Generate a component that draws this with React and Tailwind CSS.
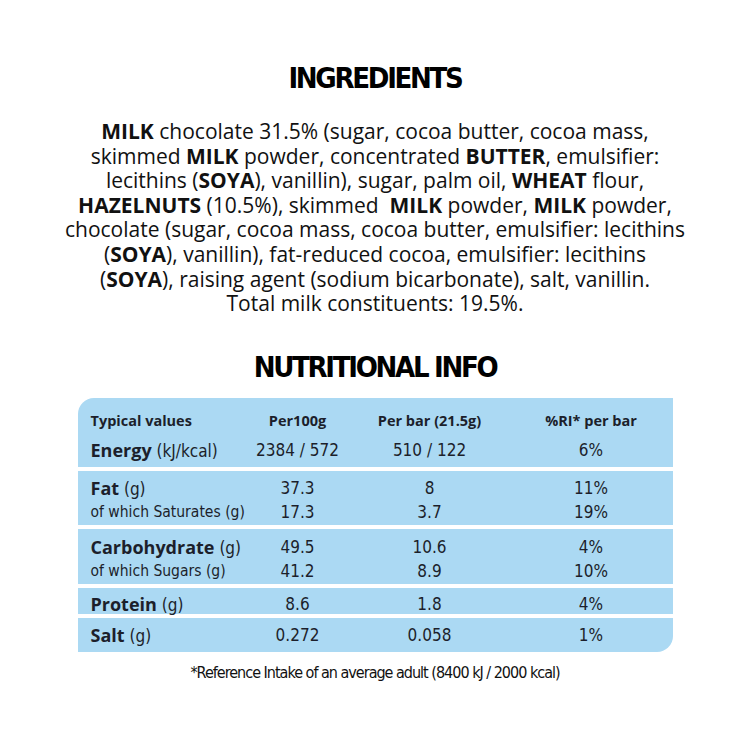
import React from "react";

const cond = "font-['DejaVu_Sans',sans-serif] font-stretch-condensed";
const body = "font-['Open_Sans',sans-serif]";
const grid = "grid grid-cols-[141px_132px_132px_1fr] pl-[13px] bg-[#abd9f3]";

function B({ children }) {
  return <span className="font-bold">{children}</span>;
}

function Label({ bold, unit }) {
  return (
    <span className="whitespace-nowrap">
      <span className={`${body} font-bold text-[18px]`}>{bold}</span>
      <span className={`${cond} text-[17px]`}> {unit}</span>
    </span>
  );
}

function Cell({ children, className = "" }) {
  return <div className={`text-center whitespace-nowrap ${cond} text-[17px] ${className}`}>{children}</div>;
}

function Head({ children, className = "" }) {
  return <div className={`text-center whitespace-nowrap ${body} font-bold text-[14.5px] ${className}`}>{children}</div>;
}

export default function App() {
  return (
    <div className="w-[750px] h-[750px] bg-white flex flex-col items-center text-black">
      <h1 className={`mt-[60px] ${cond} font-bold text-[29px] leading-[36px] tracking-[-2.3px]`}>INGREDIENTS</h1>
      <p className={`mt-[23px] ${body} text-[21px] leading-[24.6px] text-center text-[#111] whitespace-nowrap`}>
        <B>MILK</B> chocolate 31.5% (sugar, cocoa butter, cocoa mass,<br />
        skimmed <B>MILK</B> powder, concentrated <B>BUTTER</B>, emulsifier:<br />
        lecithins (<B>SOYA</B>), vanillin), sugar, palm oil, <B>WHEAT</B> flour,<br />
        <B>HAZELNUTS</B> (10.5%), skimmed&nbsp; <B>MILK</B> powder, <B>MILK</B> powder,<br />
        chocolate (sugar, cocoa mass, cocoa butter, emulsifier: lecithins<br />
        (<B>SOYA</B>), vanillin), fat-reduced cocoa, emulsifier: lecithins<br />
        (<B>SOYA</B>), raising agent (sodium bicarbonate), salt, vanillin.<br />
        Total milk constituents: 19.5%.
      </p>
      <h2 className={`mt-[33px] ${cond} font-bold text-[29px] leading-[36px] tracking-[-2.3px]`}>NUTRITIONAL INFO</h2>

      <div className="mt-[13px] w-[595px] flex flex-col gap-[4px] text-[#1c1f2b]">
        <div className={`${grid} rounded-tl-[16px] h-[69px] pt-[12px] grid-rows-[22px_38px] items-center`}>
          <div className={`${body} font-bold text-[14.5px]`}>Typical values</div>
          <Head>Per100g</Head>
          <Head>Per bar (21.5g)</Head>
          <Head className="pl-[14px]">%RI* per bar</Head>
          <Label bold="Energy" unit="(kJ/kcal)" />
          <Cell>2384 / 572</Cell>
          <Cell>510 / 122</Cell>
          <Cell className="pl-[14px]">6%</Cell>
        </div>
        <div className={`${grid} h-[54px] pt-[6px] grid-rows-[24px_24px] items-center`}>
          <Label bold="Fat" unit="(g)" />
          <Cell>37.3</Cell>
          <Cell>8</Cell>
          <Cell className="pl-[14px]">11%</Cell>
          <div className={`${cond} text-[15.5px] whitespace-nowrap`}>of which Saturates (g)</div>
          <Cell>17.3</Cell>
          <Cell>3.7</Cell>
          <Cell className="pl-[14px]">19%</Cell>
        </div>
        <div className={`${grid} h-[55px] pt-[7px] grid-rows-[24px_24px] items-center`}>
          <Label bold="Carbohydrate" unit="(g)" />
          <Cell>49.5</Cell>
          <Cell>10.6</Cell>
          <Cell className="pl-[14px]">4%</Cell>
          <div className={`${cond} text-[15.5px] whitespace-nowrap`}>of which Sugars (g)</div>
          <Cell>41.2</Cell>
          <Cell>8.9</Cell>
          <Cell className="pl-[14px]">10%</Cell>
        </div>
        <div className={`${grid} h-[26px] pt-[3px] items-center`}>
          <Label bold="Protein" unit="(g)" />
          <Cell>8.6</Cell>
          <Cell>1.8</Cell>
          <Cell className="pl-[14px]">4%</Cell>
        </div>
        <div className={`${grid} rounded-br-[16px] h-[34px] pt-[2px] items-center`}>
          <Label bold="Salt" unit="(g)" />
          <Cell>0.272</Cell>
          <Cell>0.058</Cell>
          <Cell className="pl-[14px]">1%</Cell>
        </div>
      </div>

      <p className={`mt-[9px] ${cond} text-[16px] tracking-[-1px] text-[#111]`}>*Reference Intake of an average adult (8400 kJ / 2000 kcal)</p>
    </div>
  );
}
